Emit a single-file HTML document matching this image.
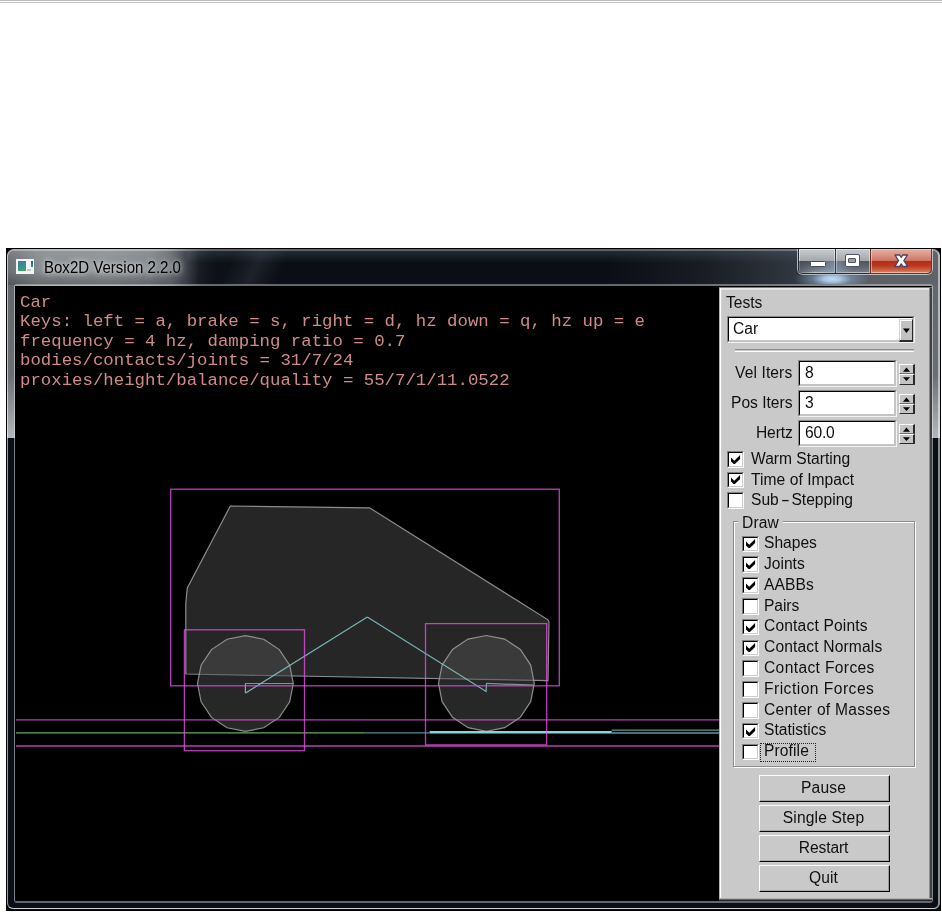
<!DOCTYPE html><html><head><meta charset="utf-8"><title>Box2D Version 2.2.0</title><style>
*{box-sizing:border-box}
html,body{margin:0;padding:0}
body{width:942px;height:912px;background:#fff;position:relative;overflow:hidden;font-family:"Liberation Sans",sans-serif}
.a{position:absolute}
.gl{position:absolute;left:15px;top:286px;width:704.3px;height:614.6px;background:#000;overflow:hidden}
.gt{will-change:transform;position:absolute;left:19.4px;color:#d08a8a;font:17.38px/19.5px "Liberation Mono",monospace;white-space:pre}
.pn{position:absolute;left:719px;top:287px;width:213px;height:614px;background:#c9c9c9;font-size:15.6px;color:#000}
.t{will-change:transform;position:absolute;white-space:pre;line-height:18px;height:18px;color:#101010}
.sunk{position:absolute;background:#fff;border-style:solid;border-width:1.3px 1.6px 1.6px 1.3px;border-color:#8a8a8a #f2f2f2 #f2f2f2 #8a8a8a}
.sunk:before{content:"";position:absolute;left:0;top:0;right:0;bottom:0;border-style:solid;border-width:1.3px 2.4px 2.4px 1.3px;border-color:#000 #c4c4c4 #c4c4c4 #000}
.cb{position:absolute;width:17.1px;height:16.8px;background:#fff;border-style:solid;border-width:1.1px 1.4px 1.4px 1.1px;border-color:#808080 #fcfcfc #fcfcfc #808080}
.cb:before{content:"";position:absolute;left:0;top:0;right:0;bottom:0;border-style:solid;border-width:1.4px 1.5px 1.5px 1.4px;border-color:#000 #ccc #ccc #000}
.rais{position:absolute;background:#c9c9c9;border-style:solid;border-width:1.5px 1.7px 1.7px 1.4px;border-color:#fcfcfc #080808 #080808 #fcfcfc}
.rais:before{content:"";position:absolute;left:0;top:0;right:0;bottom:0;border-style:solid;border-width:0 .9px .7px 0;border-color:transparent #9c9c9c #a4a4a4 transparent}
.sp{position:absolute;left:899.4px;width:15.6px;height:10.3px;background:#c4c4c4;border-style:solid;border-width:1.3px 2px 1px 1.4px;border-color:#fcfcfc #2a2a2a #707070 #fcfcfc}
.sp.d{border-bottom-width:1.9px;border-bottom-color:#2a2a2a}
.lb{position:absolute;background:#c2c2c2;border-style:solid;border-width:1.3px 1.9px 2px 1.3px;border-color:#d6d6d6 #2a2a2a #2a2a2a #d6d6d6}
.lb:before{content:"";position:absolute;left:0;top:0;right:0;bottom:0;border-style:solid;border-width:1.3px 0 0 1.2px;border-color:#fff}
.btn{position:absolute;left:758.8px;width:131.3px;height:27.4px}
</style></head><body>
<div class="a" style="left:0;top:0;width:942px;height:1px;background:#bbb"></div>
<div class="a" style="left:0;top:2px;width:942px;height:1px;background:#c4c4c4"></div>
<div class="a" id="win" style="left:6px;top:248px;width:935px;height:662.5px;background:#000"></div>
<div class="a" id="glass" style="left:7px;top:249px;width:933px;height:660.5px;border-radius:7px 7px 6px 6px;background:#0a0e16;overflow:hidden"><div class="a" style="left:0;top:0;width:933px;height:37px;background:linear-gradient(90deg,#6c7176 0,#868b8f 30px,#8c9195 100px,#82878c 142px,#6a6f75 164px,#3c4147 180px,#1a1e24 192px,#0e1218 207px,#0b0f15 235px,#0b0f15 600px,#1a1e24 700px,#2c323a 770px,#363e48 812px,#4a5058 835px,#5c6064 865px,#606468 933px)"></div><div class="a" style="left:0;top:0;width:210px;height:36px;-webkit-mask-image:linear-gradient(90deg,#000 0,#000 150px,transparent 205px);mask-image:linear-gradient(90deg,#000 0,#000 150px,transparent 205px);background:linear-gradient(180deg,rgba(255,255,255,.10) 0,rgba(255,255,255,0) 40%,rgba(0,0,0,0) 60%,rgba(0,0,0,.25) 100%)"></div><div class="a" style="left:195px;top:0;width:120px;height:36px;background:linear-gradient(115deg,rgba(120,135,150,0) 25%,rgba(120,135,150,.16) 45%,rgba(120,135,150,0) 65%)"></div><div class="a" style="left:180px;top:2px;width:620px;height:12px;background:linear-gradient(180deg,rgba(90,110,130,.28) 0,rgba(90,110,130,0) 100%)"></div><div class="a" style="left:0;top:36px;width:8px;height:153px;background:linear-gradient(180deg,#63686c 0,#6a6f73 90px,#b4b8bb 153px)"></div><div class="a" style="right:0;top:36px;width:8px;height:153px;background:linear-gradient(180deg,#63686c 0,#6a6f73 90px,#b4b8bb 153px)"></div></div>
<div class="a" style="left:7px;top:249px;width:933px;height:660.3px;border-radius:7px 7px 6px 6px;border:1.5px solid rgba(255,255,255,.6);border-right:2px solid rgba(255,255,255,.53);border-top-width:2px;border-top-color:rgba(255,255,255,.34);border-bottom-width:1.2px;border-bottom-color:rgba(255,255,255,.8)"></div>
<div class="a" style="left:13.5px;top:284px;width:919.9px;height:619px;border-radius:3px;border-style:solid;border-width:2px 1.5px 2px 1.5px;border-color:rgba(235,240,245,.40) rgba(235,240,245,.52) rgba(235,240,245,.40) rgba(235,240,245,.5);background:#000;background-clip:padding-box"></div>
<div class="a" style="left:16px;top:259px;width:18px;height:15px;background:#f4f4f4"><div class="a" style="left:2px;top:2px;width:8px;height:10px;background:linear-gradient(160deg,#3a78b8,#3aa860)"></div><div class="a" style="left:15px;top:2px;width:2px;height:6px;background:linear-gradient(#2a50c0,#30a050)"></div><div class="a" style="left:11px;top:10px;width:4px;height:2px;background:#c4c4c4"></div></div>
<div class="a" style="left:43.6px;top:256.9px;font-size:16.2px;line-height:20px;color:#000;white-space:pre;transform-origin:0 0;transform:scaleX(.928);text-shadow:0 0 6px rgba(255,255,255,.8),0 0 10px rgba(255,255,255,.6)">Box2D Version 2.2.0</div>
<div class="a" style="left:797px;top:249px;width:136px;height:26px;border-radius:0 0 6px 6px;border:1px solid rgba(225,230,235,.7);border-top:none"></div>
<div class="a" style="left:798px;top:249px;width:134px;height:25px;border-radius:0 0 5px 5px;border:1px solid #2c3038;border-top:none;overflow:hidden"><div class="a" style="left:0;top:0;width:36px;height:24px;background:linear-gradient(180deg,#c8ccd0 0,#b2b6ba 30%,#a4a8ac 49%,#50555e 51%,#6a7480 80%,#8a96a4 100%);box-shadow:inset 0 0 0 1px rgba(255,255,255,.45)"></div><div class="a" style="left:0;top:12px;width:36px;height:12px;background:linear-gradient(90deg,rgba(60,64,72,.5) 0,rgba(60,64,72,0) 45%,rgba(150,175,205,.55) 100%)"></div><div class="a" style="left:36px;top:0;width:1px;height:24px;background:#3a3e46"></div><div class="a" style="left:37px;top:0;width:34px;height:24px;background:linear-gradient(180deg,#c8ccd0 0,#b2b6ba 30%,#a4a8ac 49%,#50555e 51%,#626a74 80%,#7c8690 100%);box-shadow:inset 0 0 0 1px rgba(255,255,255,.45)"></div><div class="a" style="left:37px;top:12px;width:34px;height:12px;background:linear-gradient(90deg,rgba(150,175,205,.5) 0,rgba(100,110,125,0) 50%)"></div><div class="a" style="left:71px;top:0;width:1px;height:24px;background:#6a3028"></div><div class="a" style="left:72px;top:0;width:61px;height:24px;background:linear-gradient(180deg,#e4b0a2 0,#dc9484 25%,#cc7464 49%,#b42c14 51%,#bc3a1e 70%,#cc6246 88%,#dc9070 100%);box-shadow:inset 0 0 0 1px rgba(255,225,215,.5)"></div></div>
<div class="a" style="left:869px;top:249px;width:63px;height:25px;border-radius:0 0 5px 0;border:1px solid #70382c;border-top:none;border-left:none"></div>
<div class="a" style="left:810px;top:261px;width:15.5px;height:6px;background:#fff;border:1.2px solid #464a5a;border-radius:1.5px"></div>
<div class="a" style="left:844.6px;top:254.2px;width:15.6px;height:12.8px;background:#fff;border:1.3px solid #50546a;border-radius:2px"><div class="a" style="left:2.6px;top:2.4px;width:7.6px;height:5.2px;background:#9a9ea6;border:1.3px solid #50546a;border-radius:1px"></div></div>
<svg class="a" style="left:892px;top:252px" width="18" height="18" viewBox="892 252 18 18"><path d="M895 255 L899.7 255 L901.2 257.5 L902.7 255 L907.4 255 L903.9 260.7 L907.6 266.5 L902.9 266.5 L901.2 263.9 L899.5 266.5 L894.8 266.5 L898.5 260.7 Z" fill="#fff" stroke="#4a4660" stroke-width="1.3" stroke-linejoin="round"/></svg>
<div class="a" style="left:786px;top:275px;width:100px;height:9px;background:radial-gradient(ellipse 38px 13px at 46px 4px,rgba(192,220,248,1) 0,rgba(178,206,238,.92) 22%,rgba(140,165,195,.55) 52%,rgba(110,125,140,0) 100%)"></div>
<div class="gl">
<svg class="a" style="left:0;top:0" width="704" height="615" viewBox="15 286 704 615" fill="none" stroke-width="1.2">
<polygon points="230.3,506 369.5,507.8 548,619.8 549,621.8 548,680.6 185.8,674 185.8,603 187.3,588" fill="#262626" stroke="#a0a0a0" stroke-opacity=".85"/>
<polygon points="293.3,683.5 289.7,701.8 279.3,717.4 263.7,727.8 245.4,731.4 227.1,727.8 211.5,717.4 201.1,701.8 197.5,683.5 201.1,665.2 211.5,649.6 227.1,639.2 245.4,635.6 263.7,639.2 279.3,649.6 289.7,665.2" fill="rgba(77,77,77,.5)" stroke="#a0a0a0" stroke-opacity=".85"/>
<polygon points="534.3,683.4 530.7,701.7 520.3,717.3 504.7,727.7 486.4,731.3 468.1,727.7 452.5,717.3 442.1,701.7 438.5,683.4 442.1,665.1 452.5,649.5 468.1,639.1 486.4,635.5 504.7,639.1 520.3,649.5 530.7,665.1" fill="rgba(77,77,77,.5)" stroke="#a0a0a0" stroke-opacity=".85"/>
<path d="M245.4 683.5 L293.3 683.5 M486.4 683.4 L534 685.2" stroke="#a0a0a0" stroke-opacity=".85"/>
<path d="M367.3 617 L246.3 692.6 L245.4 692.6 L245.4 683.5 M367.3 617 L486.1 691.4 L486.4 683.4" stroke="#80cccc" stroke-opacity=".85"/>
<path d="M16 732.8 L364.6 732.8" stroke="#78d878" stroke-opacity=".8" stroke-width="1.3"/>
<path d="M364.6 732.8 L429.6 732.8" stroke="#78c4c4" stroke-opacity=".72" stroke-width="1.3"/>
<path d="M429.6 732.2 L611.7 732.2" stroke="#80d8d8" stroke-width="2.6"/>
<path d="M611.7 730.2 L719.5 730.2 M611.7 733 L719.5 733" stroke="#78c4c4" stroke-opacity=".78" stroke-width="1.3"/>
<g stroke="#e64ee6" stroke-opacity=".8" stroke-width="1.3"><rect x="170.7" y="489.2" width="388.6" height="196.6"/><rect x="184.4" y="629.8" width="120.1" height="120.9"/><rect x="425.5" y="623.6" width="121.2" height="121.3"/><path d="M16 719.9 H719.5 M16 746 H719.5"/></g>
</svg>
<div class="gt" style="left:4.8px;top:6.6px">Car</div>
<div class="gt" style="left:4.8px;top:26.1px">Keys: left = a, brake = s, right = d, hz down = q, hz up = e</div>
<div class="gt" style="left:4.8px;top:45.7px">frequency = 4 hz, damping ratio = 0.7</div>
<div class="gt" style="left:4.8px;top:65.2px">bodies/contacts/joints = 31/7/24</div>
<div class="gt" style="left:4.8px;top:84.7px">proxies/height/balance/quality = 55/7/1/11.0522</div>
</div>
<div class="pn" id="pn">
<div class="a" style="left:0px;top:0px;width:213px;height:1px;background:#7a7a7a"></div>
<div class="a" style="left:0px;top:1px;width:213px;height:1px;background:#e6e6e6"></div>
<div class="a" style="left:0px;top:2px;width:213px;height:1px;background:#e2e2e2"></div>
<div class="a" style="left:0px;top:1px;width:1px;height:613px;background:#b4b4b4"></div>
<div class="a" style="left:1px;top:1px;width:1px;height:612px;background:#fcfcfc"></div>
<div class="a" style="left:2px;top:3px;width:1px;height:609px;background:#d2d2d2"></div>
<div class="a" style="left:210px;top:1px;width:1px;height:613px;background:#8a8a8a"></div>
<div class="a" style="left:211px;top:1px;width:2px;height:613px;background:#404244"></div>
<div class="a" style="left:1px;top:611px;width:212px;height:1px;background:#b0b0b0"></div>
<div class="a" style="left:0px;top:612px;width:213px;height:1px;background:#606060"></div>
<div class="a" style="left:0px;top:613px;width:213px;height:1px;background:#262628"></div>
</div>
<div class="t" style="left:726.4px;top:293.7px;font-size:15.6px;">Tests</div>
<div class="sunk" style="left:726.6px;top:315.7px;width:188.4px;height:27.6px"></div>
<div class="t" style="left:733.4px;top:319.9px;font-size:15.6px;">Car</div>
<div class="lb" style="left:899.2px;top:319px;width:14.2px;height:22.8px"></div>
<svg class="a" style="left:902px;top:328px" width="9" height="6" viewBox="0 0 9 6"><path d="M1 0.5 H7.9 L4.45 4.9 Z" fill="#000"/></svg>
<div class="a" style="left:735px;top:349.2px;width:179px;height:1.3px;background:#8c8c8c"></div>
<div class="a" style="left:735px;top:350.5px;width:179px;height:1.3px;background:#fcfcfc"></div>
<div class="t" style="right:149.2px;top:363.9px;font-size:15.6px;letter-spacing:0.11px;">Vel Iters</div>
<div class="sunk" style="left:797.8px;top:359.7px;width:99.2px;height:27.4px"></div>
<div class="t" style="left:804.9px;top:364.1px;font-size:15.6px;">8</div>
<div class="sp" style="top:364.0px"></div>
<div class="sp d" style="top:374.3px"></div>
<svg class="a" style="left:902px;top:366.8px" width="10" height="15" viewBox="0 0 10 15"><path d="M4.5 0.4 L8 4.7 H1 Z M1 10.3 H8 L4.5 14 Z" fill="#000"/></svg>
<div class="t" style="right:149.2px;top:393.8px;font-size:15.6px;">Pos Iters</div>
<div class="sunk" style="left:797.8px;top:389.6px;width:99.2px;height:27.4px"></div>
<div class="t" style="left:804.9px;top:394.0px;font-size:15.6px;">3</div>
<div class="sp" style="top:393.9px"></div>
<div class="sp d" style="top:404.2px"></div>
<svg class="a" style="left:902px;top:396.7px" width="10" height="15" viewBox="0 0 10 15"><path d="M4.5 0.4 L8 4.7 H1 Z M1 10.3 H8 L4.5 14 Z" fill="#000"/></svg>
<div class="t" style="right:149.2px;top:423.7px;font-size:15.6px;letter-spacing:-0.14px;">Hertz</div>
<div class="sunk" style="left:797.8px;top:419.5px;width:99.2px;height:27.4px"></div>
<div class="t" style="left:804.9px;top:423.9px;font-size:15.6px;letter-spacing:-0.23px;">60.0</div>
<div class="sp" style="top:423.8px"></div>
<div class="sp d" style="top:434.1px"></div>
<svg class="a" style="left:902px;top:426.6px" width="10" height="15" viewBox="0 0 10 15"><path d="M4.5 0.4 L8 4.7 H1 Z M1 10.3 H8 L4.5 14 Z" fill="#000"/></svg>
<div class="cb" style="left:727.2px;top:450.8px"></div>
<svg class="a" style="left:731.1px;top:454.6px" width="10" height="10" viewBox="0 0 7.7 7.7"><path d="M0 2 L2.5 4.5 L7 0 L7 3 L3 7 L2 7 L0 5 Z" fill="#000"/></svg>
<div class="t" style="left:750.6px;top:449.8px;font-size:15.6px;">Warm Starting</div>
<div class="cb" style="left:727.2px;top:471.6px"></div>
<svg class="a" style="left:731.1px;top:475.4px" width="10" height="10" viewBox="0 0 7.7 7.7"><path d="M0 2 L2.5 4.5 L7 0 L7 3 L3 7 L2 7 L0 5 Z" fill="#000"/></svg>
<div class="t" style="left:750.6px;top:470.6px;font-size:15.6px;letter-spacing:0.05px;">Time of Impact</div>
<div class="cb" style="left:727.2px;top:492.4px"></div>
<div class="t" style="left:750.6px;top:491.4px;font-size:15.6px;">Sub<span style="display:inline-block;width:12.7px;text-align:center;transform:scaleX(1.7)">-</span>Stepping</div>
<div class="a" style="left:734.2px;top:522.25px;width:181.8px;height:246.2px;border:1.3px solid #fcfcfc"></div>
<div class="a" style="left:732.85px;top:520.85px;width:181.8px;height:246.2px;border:1.3px solid #8c8c8c"></div>
<div class="a" style="left:737.8px;top:519px;width:45.4px;height:5px;background:#c9c9c9"></div>
<div class="t" style="left:741.6px;top:513.6px;font-size:15.6px;letter-spacing:0.16px;">Draw</div>
<div class="cb" style="left:741.8px;top:535.5px"></div>
<svg class="a" style="left:745.7px;top:539.3px" width="10" height="10" viewBox="0 0 7.7 7.7"><path d="M0 2 L2.5 4.5 L7 0 L7 3 L3 7 L2 7 L0 5 Z" fill="#000"/></svg>
<div class="t" style="left:764.2px;top:534.2px;font-size:15.6px;">Shapes</div>
<div class="cb" style="left:741.8px;top:556.3px"></div>
<svg class="a" style="left:745.7px;top:560.1px" width="10" height="10" viewBox="0 0 7.7 7.7"><path d="M0 2 L2.5 4.5 L7 0 L7 3 L3 7 L2 7 L0 5 Z" fill="#000"/></svg>
<div class="t" style="left:764.2px;top:555.0px;font-size:15.6px;">Joints</div>
<div class="cb" style="left:741.8px;top:577.1px"></div>
<svg class="a" style="left:745.7px;top:580.9px" width="10" height="10" viewBox="0 0 7.7 7.7"><path d="M0 2 L2.5 4.5 L7 0 L7 3 L3 7 L2 7 L0 5 Z" fill="#000"/></svg>
<div class="t" style="left:764.2px;top:575.8px;font-size:15.6px;letter-spacing:0.10px;">AABBs</div>
<div class="cb" style="left:741.8px;top:597.9px"></div>
<div class="t" style="left:764.2px;top:596.6px;font-size:15.6px;letter-spacing:-0.08px;">Pairs</div>
<div class="cb" style="left:741.8px;top:618.7px"></div>
<svg class="a" style="left:745.7px;top:622.5px" width="10" height="10" viewBox="0 0 7.7 7.7"><path d="M0 2 L2.5 4.5 L7 0 L7 3 L3 7 L2 7 L0 5 Z" fill="#000"/></svg>
<div class="t" style="left:764.2px;top:617.4px;font-size:15.6px;letter-spacing:0.17px;">Contact Points</div>
<div class="cb" style="left:741.8px;top:639.5px"></div>
<svg class="a" style="left:745.7px;top:643.3px" width="10" height="10" viewBox="0 0 7.7 7.7"><path d="M0 2 L2.5 4.5 L7 0 L7 3 L3 7 L2 7 L0 5 Z" fill="#000"/></svg>
<div class="t" style="left:764.2px;top:638.2px;font-size:15.6px;letter-spacing:0.15px;">Contact Normals</div>
<div class="cb" style="left:741.8px;top:660.3px"></div>
<div class="t" style="left:764.2px;top:659.0px;font-size:15.6px;letter-spacing:0.36px;">Contact Forces</div>
<div class="cb" style="left:741.8px;top:681.1px"></div>
<div class="t" style="left:764.2px;top:679.8px;font-size:15.6px;letter-spacing:0.48px;">Friction Forces</div>
<div class="cb" style="left:741.8px;top:701.9px"></div>
<div class="t" style="left:764.2px;top:700.6px;font-size:15.6px;letter-spacing:0.25px;">Center of Masses</div>
<div class="cb" style="left:741.8px;top:722.7px"></div>
<svg class="a" style="left:745.7px;top:726.5px" width="10" height="10" viewBox="0 0 7.7 7.7"><path d="M0 2 L2.5 4.5 L7 0 L7 3 L3 7 L2 7 L0 5 Z" fill="#000"/></svg>
<div class="t" style="left:764.2px;top:721.4px;font-size:15.6px;">Statistics</div>
<div class="cb" style="left:741.8px;top:743.5px"></div>
<div class="t" style="left:764.2px;top:742.2px;font-size:15.6px;letter-spacing:0.10px;">Profile</div>
<div class="a" style="left:760px;top:742.5px;width:56px;height:19.5px;border:1.3px dotted #222"></div>
<div class="rais btn" style="top:775.0px"></div>
<div class="t" style="left:758px;width:131px;text-align:center;top:779.2px;font-size:15.6px;letter-spacing:0.15px">Pause</div>
<div class="rais btn" style="top:804.9px"></div>
<div class="t" style="left:758px;width:131px;text-align:center;top:809.1px;font-size:15.6px;letter-spacing:0.17px">Single Step</div>
<div class="rais btn" style="top:834.8px"></div>
<div class="t" style="left:758px;width:131px;text-align:center;top:839.0px;font-size:15.6px;letter-spacing:-0.10px">Restart</div>
<div class="rais btn" style="top:864.7px"></div>
<div class="t" style="left:758px;width:131px;text-align:center;top:868.9px;font-size:15.6px;letter-spacing:0.08px">Quit</div>
</body></html>
